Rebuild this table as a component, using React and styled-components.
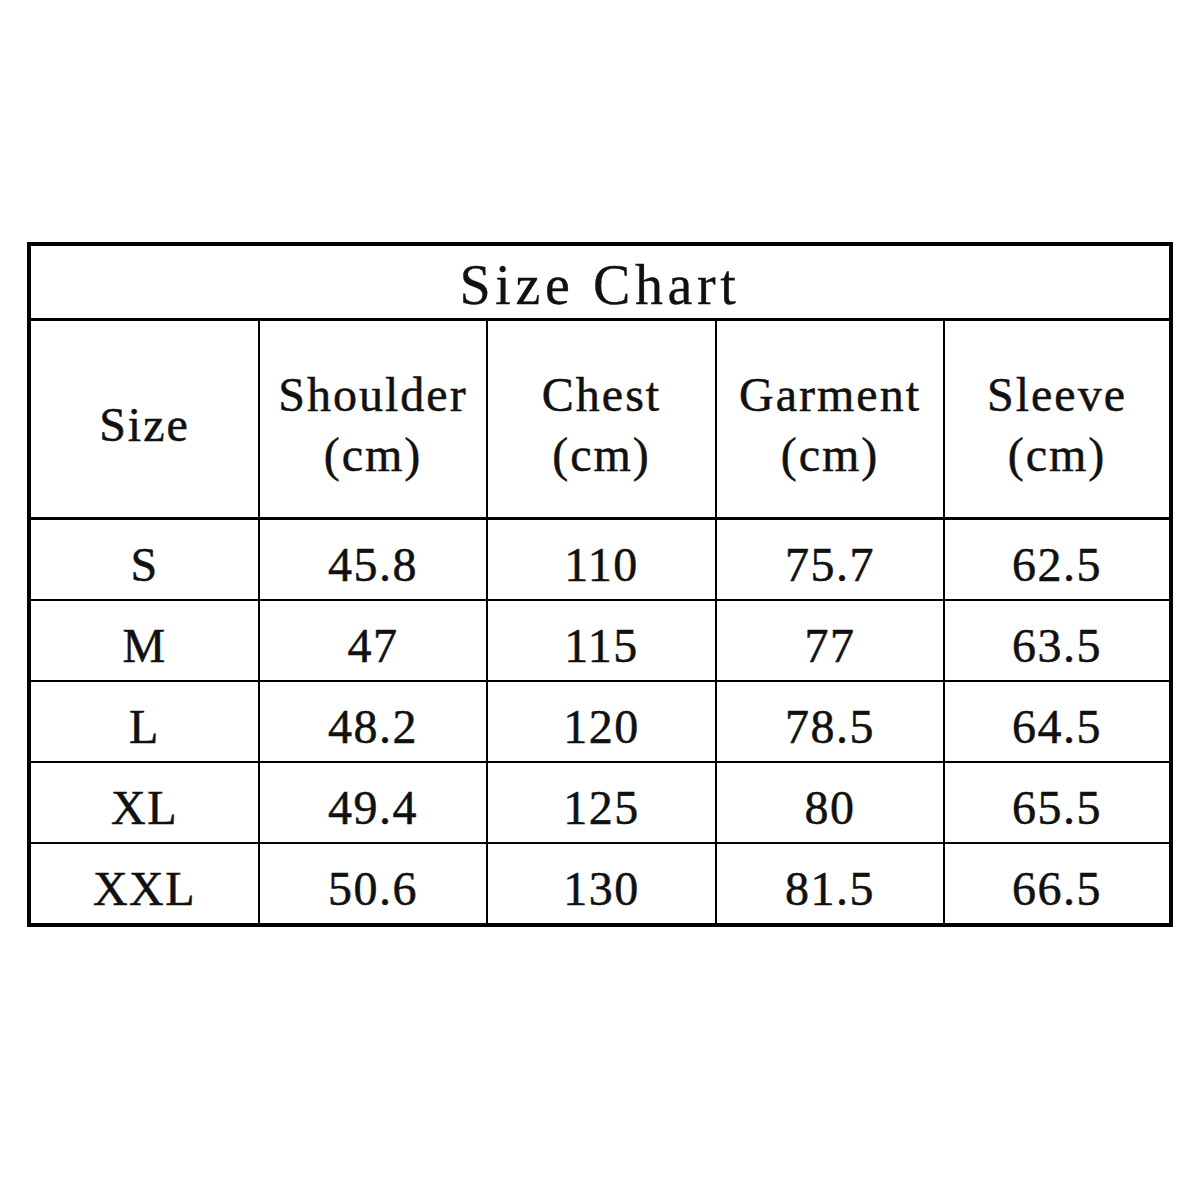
import React from 'react';
import styled, { createGlobalStyle } from 'styled-components';

// 全体のスタイル
const GlobalStyle = createGlobalStyle`
  html, body {
    margin: 0;
    padding: 0;
    background-color: #ffffff;
  }
  body {
    width: 1200px;
    height: 1200px;
    font-family: "Liberation Serif", "Noto Sans CJK SC", serif;
    color: #111111;
  }
`;

const COLUMNS = '229px 228px 229px 228px 1fr';

const PageWrapper = styled.div`
  padding-top: 242px;
  padding-left: 27px;
`;

const ChartWrapper = styled.div`
  box-sizing: border-box;
  width: 1146px;
  border: 4px solid #000000;
`;

const TitleWrapper = styled.div`
  box-sizing: border-box;
  height: 75px;
  border-bottom: 3px solid #000000;
  display: flex;
  align-items: center;
  justify-content: center;
  font-size: 56px;
  letter-spacing: 4.6px;
  padding-top: 6px;
  -webkit-text-stroke: 0.3px #111111;
`;

const RowWrapper = styled.div`
  display: grid;
  grid-template-columns: ${COLUMNS};
  height: ${(props) => (props.header ? '196px' : '79px')};
  border-bottom: ${(props) =>
    props.last ? 'none' : props.header ? '3px solid #000000' : '2px solid #000000'};
`;

const CellWrapper = styled.div`
  box-sizing: border-box;
  display: flex;
  flex-direction: column;
  align-items: center;
  justify-content: center;
  border-right: ${(props) => (props.last ? 'none' : '2px solid #000000')};
  font-size: 48px;
  line-height: ${(props) => (props.header ? '60px' : '48px')};
  letter-spacing: ${(props) => (props.header ? '2px' : '1.5px')};
  -webkit-text-stroke: 0.5px #111111;
  padding-top: ${(props) => (props.header ? '12px' : '10px')};
`;

const HEADERS = [
  ['Size'],
  ['Shoulder', '(cm)'],
  ['Chest', '(cm)'],
  ['Garment', '(cm)'],
  ['Sleeve', '(cm)'],
];

const ROWS = [
  ['S', '45.8', '110', '75.7', '62.5'],
  ['M', '47', '115', '77', '63.5'],
  ['L', '48.2', '120', '78.5', '64.5'],
  ['XL', '49.4', '125', '80', '65.5'],
  ['XXL', '50.6', '130', '81.5', '66.5'],
];

const App = () => {
  return (
    <>
      <GlobalStyle />
      <PageWrapper>
        <ChartWrapper>
          <TitleWrapper>Size Chart</TitleWrapper>
          <RowWrapper header>
            {HEADERS.map((lines, i) => (
              <CellWrapper header key={i} last={i === HEADERS.length - 1}>
                {lines.map((line) => (
                  <span key={line}>{line}</span>
                ))}
              </CellWrapper>
            ))}
          </RowWrapper>
          {ROWS.map((row, r) => (
            <RowWrapper key={row[0]} last={r === ROWS.length - 1}>
              {row.map((value, i) => (
                <CellWrapper key={i} last={i === row.length - 1}>
                  {value}
                </CellWrapper>
              ))}
            </RowWrapper>
          ))}
        </ChartWrapper>
      </PageWrapper>
    </>
  );
};

export default App;
